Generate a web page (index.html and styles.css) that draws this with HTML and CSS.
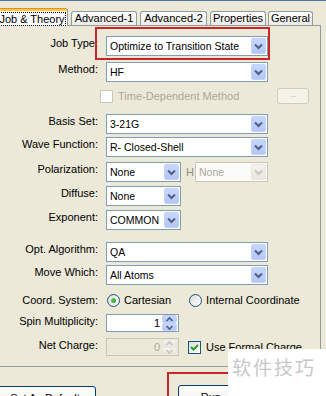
FILE: index.html
```html
<!DOCTYPE html>
<html lang="en">
<head>
    <meta charset="UTF-8">
    <title>Job &amp; Theory</title>
    <link rel="stylesheet" href="styles.css">
</head>
<body>
    <div class="dialog">
        <div class="topline"></div>
        <div class="tabs">
            <div class="tab active"><span class="focus">Job &amp; Theory</span></div>
            <div class="tab t-adv1">Advanced-1</div>
            <div class="tab t-adv2">Advanced-2</div>
            <div class="tab t-props">Properties</div>
            <div class="tab t-gen">General</div>
        </div>

        <div class="panel">
            <div class="row r-job">
                <label class="lbl">Job Type:</label>
                <div class="combo wide">Optimize to Transition State<span class="arrow"><svg width="13" height="16" viewBox="0 0 13 16"><path d="M3 6.5 L6.5 10 L10 6.5" /></svg></span></div>
            </div>
            <div class="row r-method">
                <label class="lbl">Method:</label>
                <div class="combo wide">HF<span class="arrow"><svg width="13" height="16" viewBox="0 0 13 16"><path d="M3 6.5 L6.5 10 L10 6.5" /></svg></span></div>
            </div>
            <div class="row r-tdm">
                <span class="check off"></span>
                <span class="dim tdm-text">Time-Dependent Method</span>
                <span class="dots">...</span>
            </div>
            <div class="row r-basis">
                <label class="lbl">Basis Set:</label>
                <div class="combo wide">3-21G<span class="arrow"><svg width="13" height="16" viewBox="0 0 13 16"><path d="M3 6.5 L6.5 10 L10 6.5" /></svg></span></div>
            </div>
            <div class="row r-wave">
                <label class="lbl">Wave Function:</label>
                <div class="combo wide">R- Closed-Shell<span class="arrow"><svg width="13" height="16" viewBox="0 0 13 16"><path d="M3 6.5 L6.5 10 L10 6.5" /></svg></span></div>
            </div>
            <div class="row r-pol">
                <label class="lbl">Polarization:</label>
                <div class="combo short">None<span class="arrow"><svg width="13" height="16" viewBox="0 0 13 16"><path d="M3 6.5 L6.5 10 L10 6.5" /></svg></span></div>
                <span class="h-lbl">H</span>
                <div class="combo h-combo disabled">None<span class="arrow"><svg width="13" height="16" viewBox="0 0 13 16"><path d="M3 6.5 L6.5 10 L10 6.5" /></svg></span></div>
            </div>
            <div class="row r-diff">
                <label class="lbl">Diffuse:</label>
                <div class="combo short">None<span class="arrow"><svg width="13" height="16" viewBox="0 0 13 16"><path d="M3 6.5 L6.5 10 L10 6.5" /></svg></span></div>
            </div>
            <div class="row r-exp">
                <label class="lbl">Exponent:</label>
                <div class="combo short">COMMON<span class="arrow"><svg width="13" height="16" viewBox="0 0 13 16"><path d="M3 6.5 L6.5 10 L10 6.5" /></svg></span></div>
            </div>
            <div class="row r-opt">
                <label class="lbl">Opt. Algorithm:</label>
                <div class="combo wide">QA<span class="arrow"><svg width="13" height="16" viewBox="0 0 13 16"><path d="M3 6.5 L6.5 10 L10 6.5" /></svg></span></div>
            </div>
            <div class="row r-move">
                <label class="lbl">Move Which:</label>
                <div class="combo wide">All Atoms<span class="arrow"><svg width="13" height="16" viewBox="0 0 13 16"><path d="M3 6.5 L6.5 10 L10 6.5" /></svg></span></div>
            </div>
            <div class="row r-coord">
                <label class="lbl">Coord. System:</label>
                <span class="radio on"></span><span class="opt-text">Cartesian</span>
                <span class="radio second"></span><span class="opt-text">Internal Coordinate</span>
            </div>
            <div class="row r-spin">
                <label class="lbl">Spin Multiplicity:</label>
                <div class="spin">1<span class="spin-btns"><span class="sb"><svg width="11" height="7" viewBox="0 0 11 7"><path d="M2.5 5 L5.5 2 L8.5 5" /></svg></span><span class="sb"><svg width="11" height="7" viewBox="0 0 11 7"><path d="M2.5 2 L5.5 5 L8.5 2" /></svg></span></span></div>
            </div>
            <div class="row r-net">
                <label class="lbl">Net Charge:</label>
                <div class="spin disabled">0<span class="spin-btns"><span class="sb"><svg width="11" height="7" viewBox="0 0 11 7"><path d="M2.5 5 L5.5 2 L8.5 5" /></svg></span><span class="sb"><svg width="11" height="7" viewBox="0 0 11 7"><path d="M2.5 2 L5.5 5 L8.5 2" /></svg></span></span></div>
                <span class="check on"><svg width="11" height="11" viewBox="0 0 11 11"><path d="M2 5 L4.5 7.5 L9 3" /></svg></span>
                <span class="opt-text">Use Formal Charge</span>
            </div>
        </div>

        <div class="footer">
            <button class="btn b-default">Set As Default</button>
            <button class="btn b-run">Run...</button>
        </div>

        <!-- red annotation frames -->
        <div class="mark mark-job"></div>
        <div class="mark mark-run"></div>

        <div class="watermark">软件技巧</div>
    </div>
</body>
</html>
```

FILE: styles.css
```css
*{
    box-sizing: border-box;
}
body{
    margin:0px;
    padding:0px;
    background-color:#ece9d8;
    font-family: "Liberation Sans", Arial, sans-serif;
    font-size: 11px;
    color:#000;
}
.dialog{
    position: relative;
    width:326px;
    height:396px;
    overflow: hidden;
}
.topline{
    height:1px;
    background-color:#4f72a8;
}

/* tabs */
.tabs{
    display: flex;
    align-items: flex-end;
    height:24px;
    margin-left:-4px;
    position: relative;
    z-index: 2;
}
.tab{
    height:14px;
    margin-left:3px;
    border:1px solid #919b9c;
    border-bottom:none;
    border-radius: 3px 3px 0 0;
    background-image: linear-gradient(#fefefe,#ecebe5);
    line-height:13px;
    text-align: center;
    white-space: nowrap;
}
.tab.active{
    height:18px;
    width:72px;
    margin-left:0px;
    margin-bottom:-1px;
    border-top:1px solid #e68b2c;
    box-shadow: inset 0 2px #ffc73c;
    background-image:none;
    background-color:#fcfcfe;
    padding-top:4px;
}
.focus{
    outline:1px dotted #000;
    outline-offset: 0px;
}
.t-adv1{ width:66px; }
.t-adv2{ width:67px; }
.t-props{ width:56px; }
.t-gen{ width:45px; margin-left:2px; }

/* panel */
.panel{
    margin-left:-4px;
    width:325px;
    height:342px;
    border:1px solid #919b9c;
    padding-top:10px;
}
.row{
    display: flex;
    height:20px;
}
.lbl{
    width:101px;
    margin-right:8px;
    text-align: right;
    line-height:13px;
    padding-top:1px;
    white-space: nowrap;
}
.r-method{ margin-top:6px; }
.r-tdm{ margin-top:6px; height:16px; padding-left:109px; align-items: center; }
.r-basis{ margin-top:10px; }
.r-wave{ margin-top:3px; }
.r-pol{ margin-top:5px; }
.r-diff{ margin-top:4px; }
.r-exp{ margin-top:4px; }
.r-opt{ margin-top:12px; }
.r-move{ margin-top:3px; }
.r-coord{ margin-top:8px; height:14px; align-items: center; }
.r-coord .lbl{ padding-top:0px; }
.r-spin{ margin-top:7px; height:18px; }
.r-net{ margin-top:6px; height:18px; align-items: center; }
.r-net .lbl{ align-self: flex-start; }

/* combo boxes */
.combo{
    position: relative;
    height:20px;
    border:1px solid #7f9db9;
    background-color:#fff;
    line-height:18px;
    padding-left:3px;
    font-size:10.5px;
    white-space: nowrap;
}
.combo.wide{ width:162px; }
.combo.short{ width:75px; }
.combo.h-combo{ width:73px; margin-left:1px; }
.arrow{
    position: absolute;
    right:1px;
    top:1px;
    width:15px;
    height:16px;
    border:1px solid #c4d3f7;
    border-radius:2px;
    background-image: linear-gradient(#c8d7fd,#b3c7f5);
    display: flex;
    align-items: center;
    justify-content: center;
}
.arrow path{
    fill:none;
    stroke:#4d6185;
    stroke-width:2;
}
.combo.disabled{
    border-color:#c9c7ba;
    background-color:#fbfbf9;
    color:#aca899;
}
.combo.disabled .arrow{
    border-color:#e9e8e0;
    background-image: linear-gradient(#f4f3ee,#e8e6dc);
}
.combo.disabled .arrow path{
    stroke:#c9c7ba;
}
.h-lbl{
    margin-left:5px;
    width:8px;
    line-height:20px;
    color:#8d8d8d;
}

/* checkboxes and radios */
.check{
    width:13px;
    height:13px;
    border:1px solid #1c5180;
    background-image: linear-gradient(135deg,#dcdcd7,#fff);
    display: flex;
    align-items: center;
    justify-content: center;
}
.check.off{
    border-color:#cac8bb;
    background-image:none;
    background-color:#fff;
}
.check path{
    fill:none;
    stroke:#21a121;
    stroke-width:2;
}
.r-tdm .check{ margin-left:-6px; }
.r-net .check{ margin-left:9px; }
.dim{
    color:#aca899;
}
.tdm-text{
    margin-left:5px;
}
.dots{
    margin-left:auto;
    margin-right:11px;
    width:32px;
    height:16px;
    border:1px solid #cdcbbe;
    border-radius:3px;
    background-color:#f5f4ea;
    color:#aca899;
    font-size:8px;
    line-height:12px;
    text-align: center;
}
.radio{
    width:13px;
    height:13px;
    margin-left:1px;
    border:1px solid #1c5180;
    border-radius:50%;
    background-image: linear-gradient(135deg,#dcdcd7,#fff);
    display: flex;
    align-items: center;
    justify-content: center;
}
.radio.on::after{
    content:"";
    width:5px;
    height:5px;
    border-radius:50%;
    background-image: linear-gradient(135deg,#5fd85c,#21a121);
}
.radio.second{
    margin-left:18px;
}
.opt-text{
    margin-left:4px;
    white-space: nowrap;
}
.r-net .opt-text{ margin-left:5px; }

/* spin boxes */
.spin{
    position: relative;
    width:73px;
    height:18px;
    border:1px solid #7f9db9;
    background-color:#fff;
    text-align: right;
    padding-right:18px;
    line-height:16px;
    font-size:11px;
}
.spin-btns{
    position: absolute;
    right:1px;
    top:0px;
    width:15px;
    height:16px;
    display: flex;
    flex-direction: column;
}
.sb{
    height:8px;
    border:1px solid #c4d3f7;
    border-radius:2px;
    background-image: linear-gradient(#c8d7fd,#b3c7f5);
    display: flex;
    align-items: center;
    justify-content: center;
}
.sb path{
    fill:none;
    stroke:#4d6185;
    stroke-width:1.6;
}
.spin.disabled{
    border-color:#c9c7ba;
    background-color:#ece9d8;
    color:#aca899;
}
.spin.disabled .sb{
    border-color:#e9e8e0;
    background-image: linear-gradient(#f4f3ee,#e8e6dc);
}
.spin.disabled .sb path{
    stroke:#c9c7ba;
}

/* footer buttons */
.footer{
    display: flex;
    padding-top:19px;
}
.btn{
    height:23px;
    border:1px solid #003c74;
    border-radius:3px;
    background-image: linear-gradient(#fff,#ecebe6);
    font-family: "Liberation Sans", Arial, sans-serif;
    font-size:11px;
    color:#000;
    padding:0px;
    padding-top:1px;
    line-height:13px;
    align-self: flex-start;
}
.b-default{
    width:102px;
    margin-left:-6px;
}
.b-run{
    width:75px;
    margin-left:82px;
    margin-top:-1px;
}

/* overlays */
.mark{
    position: absolute;
    border:2px solid #c9252b;
}
.mark-job{
    left:95px;
    top:27px;
    width:175px;
    height:33px;
}
.mark-run{
    left:167px;
    top:372px;
    width:120px;
    height:40px;
}
.watermark{
    position: absolute;
    left:228px;
    top:349px;
    width:98px;
    height:47px;
    background-color:#fff;
    color:#c8c8c8;
    font-family: "Noto Sans CJK SC", sans-serif;
    font-size:19px;
    letter-spacing:2px;
    line-height:28px;
    padding-top:4px;
    padding-left:4px;
    white-space: nowrap;
}
```
